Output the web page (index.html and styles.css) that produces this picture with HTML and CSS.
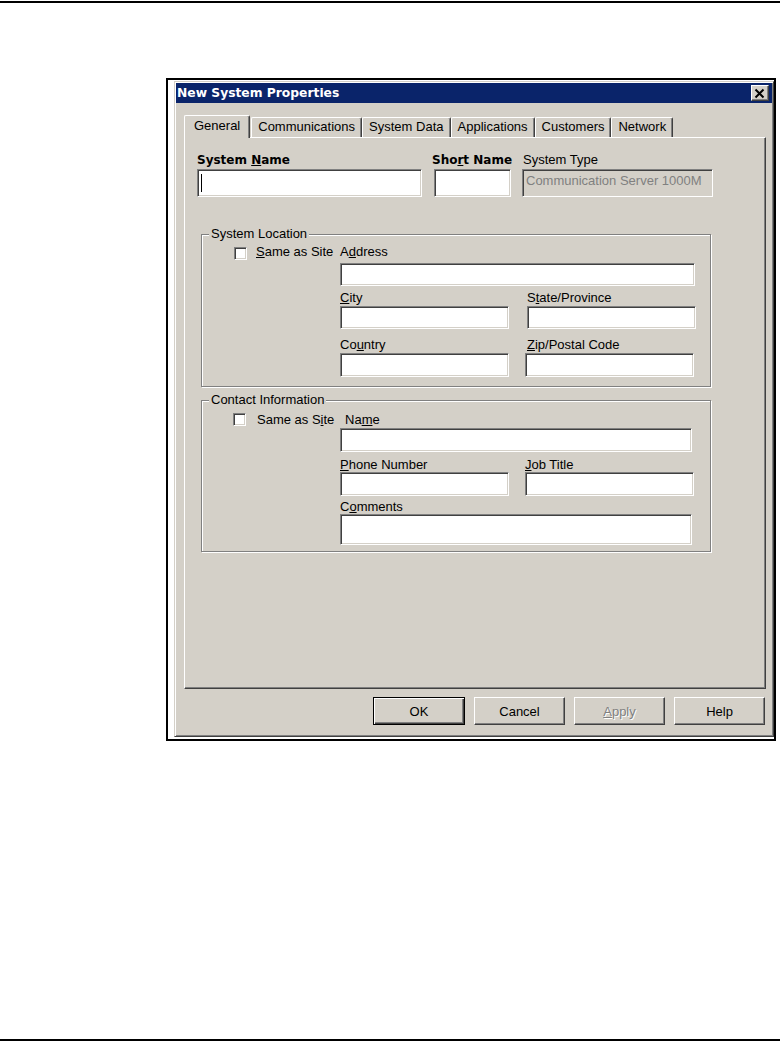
FILE: index.html
```html
<!DOCTYPE html>
<html>
<head>
<meta charset="utf-8">
<title>New System Properties</title>
<link rel="stylesheet" href="styles.css">
</head>
<body>
<div class="page">
  <div class="rule rule-top"></div>
  <div class="frame">
    <div class="dialog">
      <div class="titlebar">
        <span class="title">New System Properties</span>
        <span class="close"><svg width="16" height="13" viewBox="0 0 16 13"><path d="M3.5 2.5 L11.5 10.5 M11.5 2.5 L3.5 10.5" stroke="#000" stroke-width="2" fill="none"/></svg></span>
      </div>
      <div class="body">
        <div class="tabs">
          <div class="tab selected">General</div>
          <div class="tab">Communications</div>
          <div class="tab">System Data</div>
          <div class="tab">Applications</div>
          <div class="tab">Customers</div>
          <div class="tab">Network</div>
        </div>
        <div class="panel">
          <div class="top-row">
            <div class="col col-name">
              <div class="label-bold">System <u>N</u>ame</div>
              <div class="field tall"><span class="caret"></span></div>
            </div>
            <div class="col col-short">
              <div class="label-bold shift">Sho<u>r</u>t Name</div>
              <div class="field tall"></div>
            </div>
            <div class="col col-type">
              <div class="label-top">System Type</div>
              <div class="field tall disabled">Communication Server 1000M</div>
            </div>
          </div>

          <div class="group group-location">
            <span class="legend">System Location</span>
            <div class="grid">
              <div class="same same-1"><span class="check"></span><span class="label"><u>S</u>ame as Site</span></div>
              <div class="fld span3 loc-address">
                <div class="label">A<u>d</u>dress</div>
                <div class="field h23 w-wide"></div>
              </div>
              <div class="fld c2 loc-row2">
                <div class="label"><u>C</u>ity</div>
                <div class="field h23 w-half"></div>
              </div>
              <div class="fld c4 loc-row2">
                <div class="label">S<u>t</u>ate/Province</div>
                <div class="field h23 w-half"></div>
              </div>
              <div class="fld c2 loc-row3">
                <div class="label">Co<u>u</u>ntry</div>
                <div class="field h24 w-half"></div>
              </div>
              <div class="fld c4 loc-row3">
                <div class="label"><u>Z</u>ip/Postal Code</div>
                <div class="field h24 w-half nudge"></div>
              </div>
            </div>
          </div>

          <div class="group group-contact">
            <span class="legend">Contact Information</span>
            <div class="grid">
              <div class="same same-2"><span class="check"></span><span class="label">Same as S<u>i</u>te</span></div>
              <div class="fld span3 con-name">
                <div class="label indent">Na<u>m</u>e</div>
                <div class="field h24 w-name"></div>
              </div>
              <div class="fld c2 con-row2">
                <div class="label"><u>P</u>hone Number</div>
                <div class="field h24 w-half"></div>
              </div>
              <div class="fld c4 con-row2 nudge">
                <div class="label"><u>J</u>ob Title</div>
                <div class="field h24 w-half"></div>
              </div>
              <div class="fld span3 con-row3">
                <div class="label">C<u>o</u>mments</div>
                <div class="field h31 w-name"></div>
              </div>
            </div>
          </div>
        </div>
        <div class="buttons">
          <div class="btn default">OK</div>
          <div class="btn">Cancel</div>
          <div class="btn disabled"><u>A</u>pply</div>
          <div class="btn">Help</div>
        </div>
      </div>
    </div>
  </div>
  <div class="rule rule-bottom"></div>
</div>
</body>
</html>
```
FILE: styles.css
```css
* { box-sizing: border-box; }

html, body {
  margin: 0;
  padding: 0;
  background: #fff;
}

body {
  font-family: "Liberation Sans", Arial, sans-serif;
  font-size: 13px;
  color: #000;
}

.page {
  width: 780px;
  height: 1042px;
  overflow: hidden;
  display: flex;
  flex-direction: column;
}

.rule {
  height: 2px;
  background: #000;
  flex: none;
}
.rule-top { margin-top: 1px; }
.rule-bottom { margin-top: 298px; }

.frame {
  flex: none;
  margin: 75px 0 0 166px;
  width: 610px;
  height: 663px;
  border: 2px solid #000;
  padding: 1px 0 2px 6px;
}

.dialog {
  width: 600px;
  height: 656px;
  background: #d4d0c8;
  border: 1px solid;
  border-color: #d4d0c8 #404040 #404040 #d4d0c8;
  box-shadow: inset 1px 1px 0 #fff, inset -1px -1px 0 #808080;
  padding: 1px;
  display: flex;
  flex-direction: column;
}

.titlebar {
  height: 20px;
  background: #0a246a;
  display: flex;
  align-items: center;
  justify-content: space-between;
  padding: 0 3px 0 1px;
  flex: none;
}

.title {
  font-family: "DejaVu Sans", sans-serif;
  font-weight: bold;
  font-size: 12.3px;
  line-height: 20px;
  color: #fff;
}

.close {
  width: 18px;
  height: 16px;
  background: #d4d0c8;
  border: 1px solid;
  border-color: #fff #404040 #404040 #fff;
  box-shadow: inset -1px -1px 0 #808080;
  display: flex;
  align-items: center;
  justify-content: center;
}
.close svg { display: block; }

.body {
  flex: 1;
  display: flex;
  flex-direction: column;
  padding: 12px 6px 10px 8px;
}

.tabs {
  display: flex;
  align-items: flex-start;
  height: 22px;
  padding-left: 2px;
  flex: none;
}

.tab {
  height: 20px;
  margin-top: 2px;
  margin-right: 0;
  padding: 0 6px;
  border: 1px solid #fff;
  border-bottom: none;
  border-right-color: #404040;
  border-radius: 2px 2px 0 0;
  box-shadow: inset -1px 0 0 #808080;
  line-height: 18px;
  white-space: nowrap;
  background: #d4d0c8;
}

.tab.selected {
  position: relative;
  z-index: 1;
  height: 23px;
  margin: 0 1px -1px -2px;
  padding: 0 9px;
  line-height: 20px;
}

.panel {
  flex: 1;
  border: 1px solid;
  border-color: #fff #404040 #404040 #fff;
  box-shadow: inset -1px -1px 0 #808080;
  padding: 14px 0 0 12px;
}

.top-row {
  display: flex;
  align-items: flex-start;
}
.col-name { width: 225px; }
.col-short { width: 77px; margin-left: 12px; }
.col-type { width: 191px; margin-left: 11px; }

.label-bold {
  font-family: "DejaVu Sans", sans-serif;
  font-weight: bold;
  font-size: 12px;
  line-height: 16px;
  white-space: nowrap;
}
.label-bold.shift { margin-left: -2px; }

.label-top {
  line-height: 16px;
  white-space: nowrap;
  margin-left: 1px;
}

.label {
  line-height: 15px;
  white-space: nowrap;
}
.label.indent { margin-left: 5px; }

.field {
  background: #fff;
  border: 1px solid;
  border-color: #808080 #fff #fff #808080;
  box-shadow: inset 1px 1px 0 #404040, inset -1px -1px 0 #d4d0c8;
}

.field.tall {
  height: 28px;
  margin-top: 1px;
  padding: 2px 0 0 3px;
}

.field.disabled {
  background: #d4d0c8;
  color: #808080;
  line-height: 18px;
  white-space: nowrap;
  overflow: hidden;
}

.caret {
  display: block;
  width: 1px;
  height: 18px;
  margin-top: 2px;
  background: #000;
}

.h23 { height: 23px; }
.h24 { height: 24px; }
.h31 { height: 31px; }
.w-half { width: 169px; }
.w-wide { width: 355px; }
.w-name { width: 352px; }

.group {
  position: relative;
  width: 510px;
  border: 1px solid #808080;
  box-shadow: inset 1px 1px 0 #fff, 1px 1px 0 #fff;
  margin-left: 4px;
}

.group-location {
  margin-top: 37px;
  padding: 9px 0 9px 0;
}

.group-contact {
  margin-top: 13px;
  padding: 11px 0 6px 0;
}

.legend {
  position: absolute;
  top: -8px;
  left: 7px;
  padding: 0 2px;
  line-height: 14px;
  background: #d4d0c8;
  white-space: nowrap;
}

.grid {
  display: grid;
  grid-template-columns: 138px 169px 18px 170px;
  align-items: start;
}

.span3 { grid-column: 2 / span 3; }
.c2 { grid-column: 2; }
.c4 { grid-column: 4; }

.same {
  grid-column: 1;
  display: flex;
  align-items: flex-start;
}
.same-1 { padding-left: 32px; }
.same-1 .check { margin-top: 3px; margin-right: 9px; }
.same-2 { padding-left: 31px; }
.same-2 .check { margin-top: 1px; margin-right: 11px; }

.check {
  flex: none;
  width: 13px;
  height: 13px;
  background: #fff;
  border: 1px solid;
  border-color: #808080 #fff #fff #808080;
  box-shadow: inset 1px 1px 0 #404040, inset -1px -1px 0 #d4d0c8;
}

.loc-address .field { margin-top: 4px; }
.loc-row2 { margin-top: 4px; }
.loc-row2 .field { margin-top: 1px; }
.loc-row3 { margin-top: 8px; }
.loc-row3 .field { margin-top: 1px; }
.field.nudge { margin-left: -2px; }

.con-name .field { margin-top: 1px; }
.con-row2 { margin-top: 5px; }
.con-row2.nudge { margin-left: -2px; }
.con-row3 { margin-top: 3px; }

.buttons {
  flex: none;
  display: flex;
  justify-content: flex-end;
  gap: 9px;
  margin-top: 8px;
  padding-right: 1px;
}

.btn {
  width: 91px;
  height: 28px;
  border: 1px solid;
  border-color: #fff #404040 #404040 #fff;
  box-shadow: inset -1px -1px 0 #808080;
  display: flex;
  align-items: center;
  justify-content: center;
  line-height: 15px;
}

.btn.default {
  width: 92px;
  border: 1px solid #000;
  box-shadow: inset 1px 1px 0 #fff, inset -1px -1px 0 #404040, inset -2px -2px 0 #808080;
}

.btn.disabled {
  color: #808080;
  text-shadow: 1px 1px 0 #fff;
}
```
